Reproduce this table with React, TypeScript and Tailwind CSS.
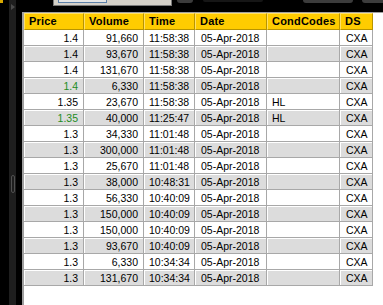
import React from 'react';

type Trade = {
  price: string;
  volume: string;
  time: string;
  date: string;
  cond: string;
  ds: string;
  up?: boolean;
};

const trades: Trade[] = [
  { price: '1.4', volume: '91,660', time: '11:58:38', date: '05-Apr-2018', cond: '', ds: 'CXA' },
  { price: '1.4', volume: '93,670', time: '11:58:38', date: '05-Apr-2018', cond: '', ds: 'CXA' },
  { price: '1.4', volume: '131,670', time: '11:58:38', date: '05-Apr-2018', cond: '', ds: 'CXA' },
  { price: '1.4', volume: '6,330', time: '11:58:38', date: '05-Apr-2018', cond: '', ds: 'CXA', up: true },
  { price: '1.35', volume: '23,670', time: '11:58:38', date: '05-Apr-2018', cond: 'HL', ds: 'CXA' },
  { price: '1.35', volume: '40,000', time: '11:25:47', date: '05-Apr-2018', cond: 'HL', ds: 'CXA', up: true },
  { price: '1.3', volume: '34,330', time: '11:01:48', date: '05-Apr-2018', cond: '', ds: 'CXA' },
  { price: '1.3', volume: '300,000', time: '11:01:48', date: '05-Apr-2018', cond: '', ds: 'CXA' },
  { price: '1.3', volume: '25,670', time: '11:01:48', date: '05-Apr-2018', cond: '', ds: 'CXA' },
  { price: '1.3', volume: '38,000', time: '10:48:31', date: '05-Apr-2018', cond: '', ds: 'CXA' },
  { price: '1.3', volume: '56,330', time: '10:40:09', date: '05-Apr-2018', cond: '', ds: 'CXA' },
  { price: '1.3', volume: '150,000', time: '10:40:09', date: '05-Apr-2018', cond: '', ds: 'CXA' },
  { price: '1.3', volume: '150,000', time: '10:40:09', date: '05-Apr-2018', cond: '', ds: 'CXA' },
  { price: '1.3', volume: '93,670', time: '10:40:09', date: '05-Apr-2018', cond: '', ds: 'CXA' },
  { price: '1.3', volume: '6,330', time: '10:34:34', date: '05-Apr-2018', cond: '', ds: 'CXA' },
  { price: '1.3', volume: '131,670', time: '10:34:34', date: '05-Apr-2018', cond: '', ds: 'CXA' },
];

const columns = [
  { label: 'Price', width: 'w-[60px]', align: 'justify-end pr-[5px]' },
  { label: 'Volume', width: 'w-[60px]', align: 'justify-end pr-[5px]' },
  { label: 'Time', width: 'w-[51px]', align: 'justify-start pl-[4px]' },
  { label: 'Date', width: 'w-[72px]', align: 'justify-start pl-[5px]' },
  { label: 'CondCodes', width: 'w-[73px]', align: 'justify-start pl-[4px]' },
  { label: 'DS', width: 'w-[33px]', align: 'justify-start pl-[5px]' },
];

const Cell: React.FC<{ col: number; shaded: boolean; green?: boolean; children: React.ReactNode }> = ({
  col,
  shaded,
  green,
  children,
}) => (
  <div className={`${columns[col].width} h-[16px] shrink-0 border-r border-b border-[#a8a8a8] bg-white pl-px pt-px`}>
    <div
      className={`flex h-full items-center ${columns[col].align} ${shaded ? 'bg-[#dcdcdc]' : 'bg-white'} ${
        green ? 'text-[#1e8c1e]' : 'text-black'
      }`}
    >
      {children}
    </div>
  </div>
);

const App: React.FC = () => {
  return (
    <div
      className="flex w-[383px] h-[305px] overflow-hidden bg-black"
      style={{ fontFamily: '"Liberation Sans", Arial, sans-serif' }}
    >
      {/* left splitter strip */}
      <div className="flex shrink-0">
        <div className="w-[9px] flex flex-col">
          <div className="w-[3px] h-[3px] bg-[#d8a800]" />
        </div>
        <div className="w-[7px] bg-[#1e1e1e] flex flex-col items-center">
          <div className="mt-[4px] ml-[1px] w-0 h-0 border-y-[3px] border-y-transparent border-l-[4px] border-l-[#4a4a4a]" />
          <div className="mt-[165px] w-[4px] h-[18px] rounded-[2px] border border-[#505050]" />
        </div>
        <div className="w-[6px]" />
      </div>

      <div className="flex flex-1 flex-col">
        {/* top chrome */}
        <div className="h-[12px] flex items-start shrink-0">
          <div className="ml-[31px] w-[119px] h-[6px] bg-[#d4d0c8] border-b border-x border-[#7a7a7a]">
            <div className="ml-[4px] w-[49px] h-[3px] bg-[#e4e4e4] border-b border-x border-[#5b7fa8]" />
          </div>
          <div className="ml-[5px] w-[16px] h-[3px] rounded-b-[3px] bg-[#3c3c3c]" />
          <div className="ml-[10px] w-[60px] h-[2px] rounded-b-[2px] bg-[#161616]" />
          <div className="ml-[40px] w-[50px] h-[3px] rounded-b-[3px] bg-[#3c3c3c]" />
          <div className="ml-[9px] w-[21px] h-[3px] rounded-bl-[3px] bg-[#3c3c3c]" />
        </div>

        {/* trades panel */}
        <div className="flex-1 bg-white border-t border-l-2 border-[#a0a0a0]">
          <div className="flex">
            {columns.map((c) => (
              <div
                key={c.label}
                className={`${c.width} h-[17px] shrink-0 flex items-center pl-[4px] bg-[#ffcc00] border-t border-l border-t-[#ffe066] border-l-[#ffe066] border-r border-b border-r-[#b89400] border-b-[#b89400] text-[11px] font-bold tracking-[0.2px] text-black`}
              >
                {c.label}
              </div>
            ))}
          </div>
          {trades.map((t, i) => {
            const shaded = i % 2 === 1;
            return (
              <div key={i} className="flex text-[10.5px] leading-none">
                <Cell col={0} shaded={shaded} green={t.up}>
                  {t.price}
                </Cell>
                <Cell col={1} shaded={shaded}>
                  {t.volume}
                </Cell>
                <Cell col={2} shaded={shaded}>
                  {t.time}
                </Cell>
                <Cell col={3} shaded={shaded}>
                  {t.date}
                </Cell>
                <Cell col={4} shaded={shaded}>
                  {t.cond}
                </Cell>
                <Cell col={5} shaded={shaded}>
                  {t.ds}
                </Cell>
              </div>
            );
          })}
        </div>
      </div>
    </div>
  );
};

export default App;
